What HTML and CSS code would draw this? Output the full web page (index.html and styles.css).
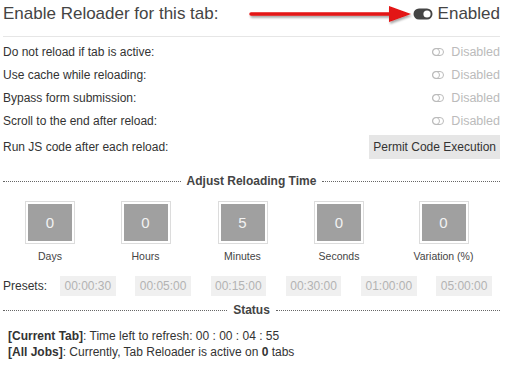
FILE: index.html
```html
<!DOCTYPE html>
<html lang="en">
<head>
  <meta charset="UTF-8" />
  <title>Tab Reloader</title>
  <link rel="stylesheet" href="styles.css">
</head>
<body>

  <div class="head">
    <span class="head-title">Enable Reloader for this tab:</span>
    <svg class="arrow" width="166" height="24" viewBox="0 0 166 24">
      <defs>
        <filter id="sh" x="-10%" y="-50%" width="120%" height="200%">
          <feDropShadow dx="1" dy="2" stdDeviation="1.2" flood-color="#000" flood-opacity="0.35" />
        </filter>
      </defs>
      <g filter="url(#sh)">
        <line x1="3" y1="10" x2="146" y2="10" stroke="#e31212" stroke-width="3.5" stroke-linecap="round" />
        <polygon points="141,2 163,10 141,18" fill="#e31212" />
      </g>
    </svg>
    <span class="switch on">
      <svg width="20" height="12" viewBox="0 0 20 12">
        <rect x="0.5" y="0.5" width="19" height="11" rx="5.5" fill="#444" />
        <circle cx="14" cy="6" r="3.6" fill="#fff" />
      </svg>
      Enabled
    </span>
  </div>

  <div class="options">
    <div class="row">
      <span>Do not reload if tab is active:</span>
      <span class="switch off">
        <svg width="12" height="8" viewBox="0 0 12 8"><rect x="0.5" y="0.5" width="11" height="7" rx="3.5" /><circle cx="4" cy="4" r="3.5" /></svg>
        Disabled
      </span>
    </div>
    <div class="row">
      <span>Use cache while reloading:</span>
      <span class="switch off">
        <svg width="12" height="8" viewBox="0 0 12 8"><rect x="0.5" y="0.5" width="11" height="7" rx="3.5" /><circle cx="4" cy="4" r="3.5" /></svg>
        Disabled
      </span>
    </div>
    <div class="row">
      <span>Bypass form submission:</span>
      <span class="switch off">
        <svg width="12" height="8" viewBox="0 0 12 8"><rect x="0.5" y="0.5" width="11" height="7" rx="3.5" /><circle cx="4" cy="4" r="3.5" /></svg>
        Disabled
      </span>
    </div>
    <div class="row">
      <span>Scroll to the end after reload:</span>
      <span class="switch off">
        <svg width="12" height="8" viewBox="0 0 12 8"><rect x="0.5" y="0.5" width="11" height="7" rx="3.5" /><circle cx="4" cy="4" r="3.5" /></svg>
        Disabled
      </span>
    </div>
    <div class="row row-btn">
      <span>Run JS code after each reload:</span>
      <button class="btn-permit">Permit Code Execution</button>
    </div>
  </div>

  <div class="section-title first">Adjust Reloading Time</div>

  <div class="timer">
    <div class="unit"><div class="box">0</div><span>Days</span></div>
    <div class="unit"><div class="box">0</div><span>Hours</span></div>
    <div class="unit"><div class="box">5</div><span>Minutes</span></div>
    <div class="unit"><div class="box">0</div><span>Seconds</span></div>
    <div class="unit"><div class="box">0</div><span>Variation (%)</span></div>
  </div>

  <div class="presets">
    <span class="presets-label">Presets:</span>
    <div class="preset-list">
      <button>00:00:30</button>
      <button>00:05:00</button>
      <button>00:15:00</button>
      <button>00:30:00</button>
      <button>01:00:00</button>
      <button>05:00:00</button>
    </div>
  </div>

  <div class="section-title">Status</div>

  <div class="status">
    <div><b>[Current Tab]</b>: Time left to refresh: 00 : 00 : 04 : 55</div>
    <div><b>[All Jobs]</b>: Currently, Tab Reloader is active on <b>0</b> tabs</div>
  </div>

</body>
</html>
```

FILE: styles.css
```css
/* Baseline */
* {
  box-sizing: border-box;
}
body {
  margin: 0;
  padding: 0 5px 0 3px;
  background: #fff;
  color: #333;
  font-family: 'Liberation Sans', Arial, sans-serif;
  font-size: 12px;
}

/* Top line with main switch */
.head {
  position: relative;
  display: flex;
  align-items: center;
  justify-content: space-between;
  height: 37px;
  padding-bottom: 8px;
  border-bottom: 1px solid #e6e6e6;
}
.head-title {
  font-size: 17px;
  color: #444;
}
.arrow {
  position: absolute;
  left: 245px;
  top: 4px;
}
.switch {
  display: flex;
  align-items: center;
}
.switch.on {
  font-size: 17px;
  color: #444;
  gap: 5px;
}
.switch.off {
  color: #bbb;
  font-size: 12.5px;
  gap: 7px;
}
.switch.off svg {
  fill: none;
  stroke: #bbb;
  stroke-width: 1;
}

/* Option rows */
.options {
  margin-top: 3px;
}
.row {
  display: flex;
  align-items: center;
  justify-content: space-between;
  height: 23px;
}
.row-btn {
  height: 30px;
}
.btn-permit {
  height: 24px;
  padding: 0 4px;
  border: none;
  background: #e6e6e6;
  color: #333;
  font: inherit;
  font-size: 12px;
}

/* Section headings with dotted lines */
.section-title {
  display: flex;
  align-items: center;
  gap: 6px;
  height: 16px;
  margin-top: 6px;
  font-weight: bold;
  color: #444;
}
.section-title.first {
  margin-top: 11px;
}
.section-title::before,
.section-title::after {
  content: '';
  flex: 1;
  border-top: 1px dotted #666;
}

/* Timer boxes */
.timer {
  display: grid;
  grid-template-columns: 94px 97px 97px 96px 1fr;
  margin-top: 12px;
}
.unit {
  display: flex;
  flex-direction: column;
  align-items: center;
}
.box {
  width: 50px;
  height: 43px;
  display: flex;
  align-items: center;
  justify-content: center;
  background: #a0a0a0;
  border: 1px solid #dcdcdc;
  box-shadow: inset 0 0 0 2px #fff;
  color: #f2f2f2;
  font-size: 15px;
}
.unit span {
  margin-top: 6px;
  line-height: 13px;
  font-size: 10.5px;
  color: #444;
}

/* Presets */
.presets {
  display: flex;
  align-items: center;
  margin-top: 13px;
}
.presets-label {
  width: 57px;
}
.preset-list {
  flex: 1;
  display: flex;
  justify-content: space-between;
  padding-right: 8px;
}
.preset-list button {
  height: 20px;
  padding: 0 4.5px;
  border: none;
  background: #f0f0f0;
  color: #b3b3b3;
  font: inherit;
  font-size: 12px;
}

/* Status */
.status {
  margin-top: 10px;
  padding-left: 5px;
  line-height: 16px;
}
```
